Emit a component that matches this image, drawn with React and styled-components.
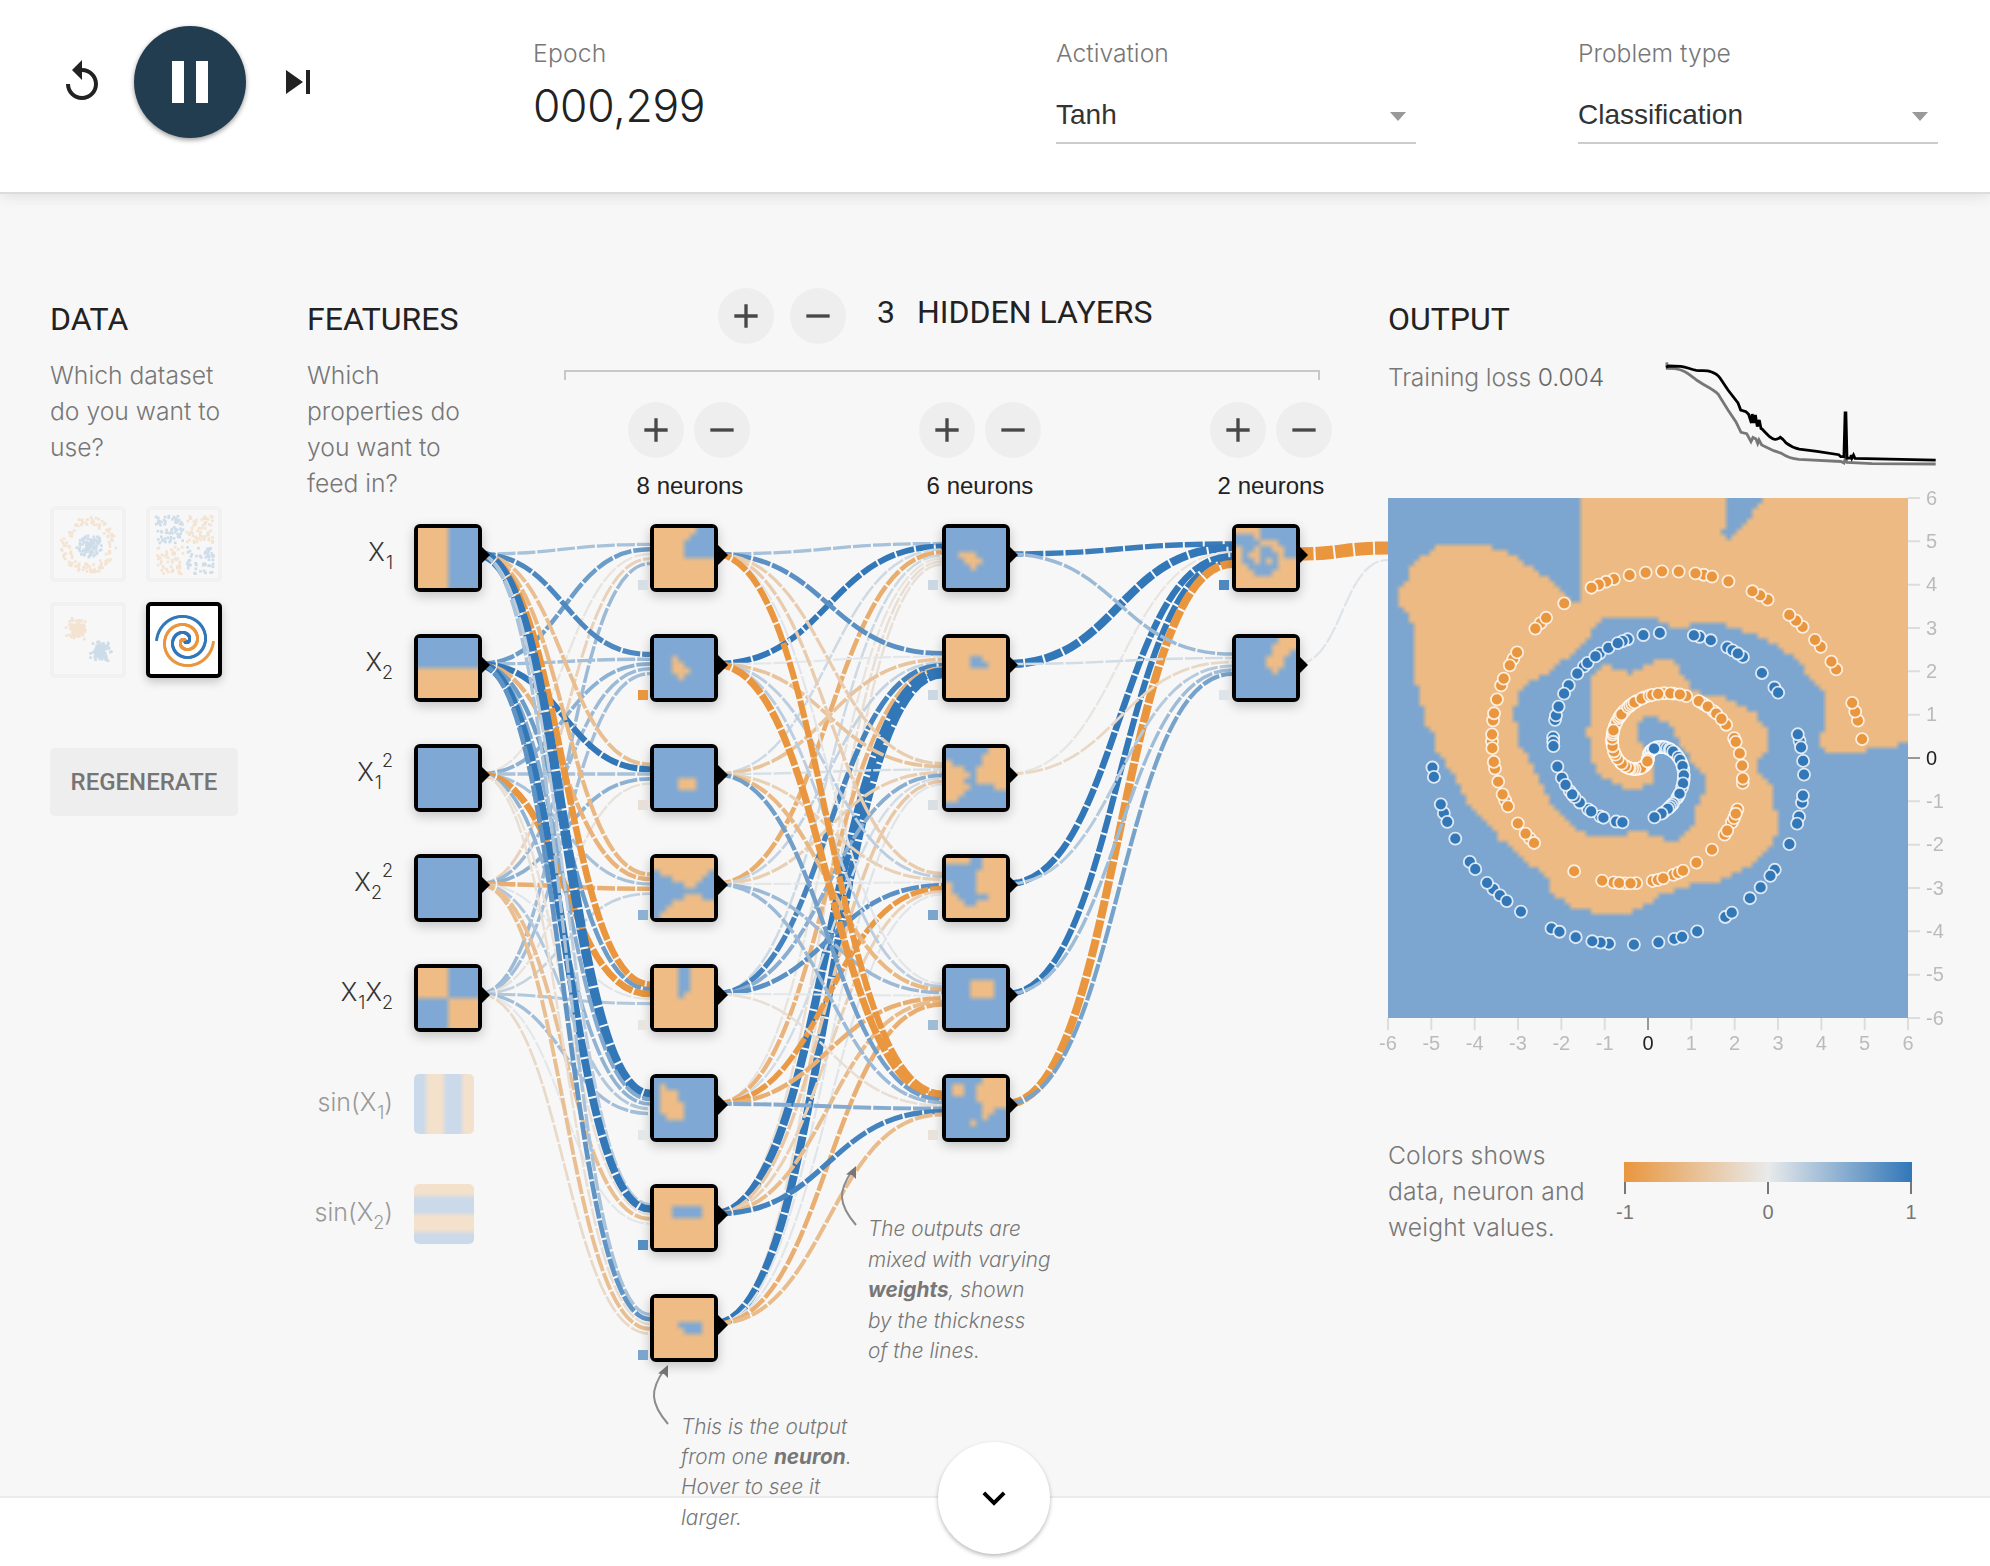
import React, { useLayoutEffect, useRef } from 'react';
import styled, { createGlobalStyle } from 'styled-components';

const ORANGE = '#e9963e';
const BLUE = '#3277b8';
const NEUTRAL = '#e8eaeb';
const sans = `"Liberation Sans", Arial, sans-serif`;
const light = `Inter, "Liberation Sans", sans-serif`;
const heading = `Roboto, "Liberation Sans", sans-serif`;

const GlobalStyle = createGlobalStyle`
  * { box-sizing: border-box; }
  body { margin: 0; background: #fff; font-family: ${sans}; color: #222; }
  button { border: 0; padding: 0; background: none; font: inherit; color: inherit; }
  h4, p { margin: 0; }
`;

/* ---------- network data ---------- */

const mix = (a, b, t) => {
  const p = (s, i) => parseInt(s.slice(1 + i * 2, 3 + i * 2), 16);
  return `rgb(${[0, 1, 2].map((i) => Math.round(p(a, i) + (p(b, i) - p(a, i)) * t)).join(',')})`;
};
const weightColor = (w) => mix(NEUTRAL, w < 0 ? ORANGE : BLUE, Math.min(1, Math.abs(w)));
const weightWidth = (w) => 2 + 3.6 * Math.abs(w);

const FIRST_CY = 554;
const PITCH = 110;
const COLUMN_CX = [444, 680, 972, 1262];
const OUTPUT_X = 1388;

// one row for each receiving neuron, one weight for each sender
const WEIGHTS = [
  [
    [0.35, 0.68, -0.07, -0.28, 0.42],
    [0.85, 0.38, 0.5, 0.42, 0.38],
    [-0.52, 1.15, 0.35, 0.5, -0.1],
    [-0.6, -0.65, 0.35, -0.7, 0.2],
    [-1.25, 0.68, -1.3, 0.04, 0.3],
    [2.1, 0.55, 0.48, 0.3, 0.38],
    [0.25, 1.6, -0.12, -0.52, 0.03],
    [0.35, 0.75, -0.14, -0.52, -0.2],
  ],
  [
    [0.36, 1.1, 0.15, -0.72, 0.15, -0.08, -0.14, -0.12],
    [0.78, 0.03, -0.45, 0.2, 0.9, -0.65, 1.7, 1.65],
    [-0.34, -0.45, 0.1, -0.32, 0.52, 0.12, -0.4, 0.05],
    [-0.36, 0.25, -0.3, 0.03, 0.78, -0.95, -0.3, 0.04],
    [0.04, 0.25, -0.6, 0.42, 0.03, -0.7, -0.55, -0.7],
    [-1.15, -1.4, 0.65, 0.42, -0.14, 0.55, 0.9, -0.55],
  ],
  [
    [0.95, 1.75, -0.06, 1.25, 1.15, -1.7],
    [0.42, 0.12, -0.22, 0.28, 0.4, 0.62],
  ],
  [[-3.1, 0.05]],
];

const links = [];
WEIGHTS.forEach((rows, layer) => {
  rows.forEach((row, to) => {
    row.forEach((w, from) => {
      const sx = COLUMN_CX[layer] + 34;
      const sy = FIRST_CY + from * PITCH;
      const tx = layer === 3 ? OUTPUT_X : COLUMN_CX[layer + 1] - 30;
      const ty = FIRST_CY + to * PITCH + ((from - (row.length - 1) / 2) / row.length) * 24;
      const mx = (sx + tx) / 2;
      links.push({ key: `${layer}-${from}-${to}`, w, d: `M${sx},${sy}C${mx},${sy} ${mx},${ty} ${tx},${ty}` });
    });
  });
});

/* 10 x 10 activation maps: "b" positive, "o" negative */
const O = 'oooooooooo';
const B = 'bbbbbbbbbb';
const FEATURES = [
  { parts: ['X', { sub: '1' }], map: Array(10).fill('ooooobbbbb'), on: true },
  { parts: ['X', { sub: '2' }], map: [B, B, B, B, B, O, O, O, O, O], on: true },
  { parts: ['X', { sub: '1' }, { sup: '2' }], map: Array(10).fill(B), on: true },
  { parts: ['X', { sub: '2' }, { sup: '2' }], map: Array(10).fill(B), on: true },
  {
    parts: ['X', { sub: '1' }, 'X', { sub: '2' }],
    map: [...Array(5).fill('ooooobbbbb'), ...Array(5).fill('bbbbbooooo')],
    on: true,
  },
  { parts: ['sin(X', { sub: '1' }, ')'], map: Array(10).fill('bbooobbboo') },
  { parts: ['sin(X', { sub: '2' }, ')'], map: [O, O, B, B, B, O, O, O, B, B] },
];

const LAYERS = [
  {
    tip: 10,
    biasLeft: -16.5,
    shift: 0,
    countShift: 1,
    neurons: [
      { bias: 0.1, map: ['ooooooobbb', 'oooooobbbb', 'ooooobbbbb', 'ooooobbbbb', 'ooooobbbbb', O, O, O, O, O] },
      { bias: -1, map: [B, B, B, 'bbbobbbbbb', 'bbboobbbbb', 'bbbooobbbb', 'bbbbobbbbb', B, B, B] },
      { bias: -0.12, map: [B, B, B, B, B, 'bbbbooobbb', 'bbbbooobbb', B, B, B] },
      {
        bias: 0.5,
        map: [O, O, 'boooooooob', 'bbbooooobb', 'bbbbboobbb', B, 'bbbbbooobb', 'bbbooooooo', 'bboooooooo', 'booooooooo'],
      },
      { bias: -0.06, map: ['oooobboooo', 'oooobboooo', 'oooobboooo', 'oooobboooo', 'oooobooooo', O, O, O, O, O] },
      {
        bias: 0.03,
        map: [B, 'bobbbbbbbb', 'booobbbbbb', 'booobbbbbb', 'boooobbbbb', 'boooobbbbb', 'bbooobbbbb', B, B, B],
      },
      { bias: 0.8, map: [O, O, O, 'ooobbbbboo', 'ooobbbbboo', O, O, O, O, O] },
      { bias: 0.6, map: [O, O, O, O, 'oooobbbboo', 'ooooobbboo', O, O, O, O] },
    ],
  },
  {
    tip: 8,
    biasLeft: -18,
    shift: -1,
    countShift: 0,
    neurons: [
      { bias: 0.16, map: [B, B, B, B, 'bbooobbbbb', 'bbbooobbbb', 'bbbbobbbbb', B, B, B] },
      { bias: 0.16, map: [O, O, O, 'oooobboooo', 'oooobbbooo', O, O, O, O, O] },
      {
        bias: 0.09,
        map: [
          'bbbbbbbooo', 'bbbbbboooo', 'obbbbboooo', 'ooobbooooo', 'oooobooooo',
          'ooobbooooo', 'oooobbbboo', 'ooobbbbbbb', 'oobbbbbbbb', B,
        ],
      },
      {
        bias: 0.6,
        map: [
          'oooobboooo', 'bbbbbboooo', 'bbbbbooooo', 'bbbbbooooo', 'obbbbooooo',
          'obbbbooooo', 'oobbbbbooo', 'ooobbooooo', O, O,
        ],
      },
      { bias: 0.4, map: [B, B, 'bbbboooobb', 'bbbboooobb', 'bbbboooobb', B, B, B, B, B] },
      {
        bias: -0.1,
        map: [
          'bbbbbboooo', 'boobbooooo', 'boobbooooo', 'bbbbbooooo', 'bbbbbboooo',
          'bbbbbboobb', 'bbbbbbobbb', 'bbbbobbbbb', B, B,
        ],
      },
    ],
  },
  {
    tip: 8,
    biasLeft: -17.5,
    shift: 0,
    countShift: 0,
    neurons: [
      {
        bias: 0.85,
        map: [
          'oooobbbbbb', 'bbbobbbbbb', 'bbbbooobbb', 'obbobboobb', 'oboobbbobb',
          'obbobobooo', 'oobbbbbooo', 'ooobbboooo', O, O,
        ],
      },
      { bias: 0.05, map: ['bbbbbbbooo', 'bbbbbboooo', 'bbbbbbooob', 'bbbbbooobb', 'bbbbbooobb', 'bbbbbbobbb', B, B, B, B] },
    ],
  },
];

/* ---------- output map ---------- */

const REGION = [
  37, 0, 37, 20, 35, 20, 34, 18.3, 33, 17.4, 32, 16.5, 31, 15.1, 29, 15, 27.8, 13.3, 26.2, 12.9, 25, 11.2, 23, 10.6,
  22.4, 10, 20, 10, 19.7, 9, 9, 9, 8, 11, 6, 11.1, 5, 12.2, 4.1, 14.5, 3, 16.4, 2, 18.3, 2, 20.6, 3, 21.2, 4, 22.2,
  4.5, 24.1, 5, 24.2, 5, 35.6, 6, 36.3, 6, 39.6, 7, 40, 7.1, 42.9, 9, 45.9, 9, 48, 11, 51, 12.9, 54, 14, 56.5, 16, 59.5,
  17.8, 61, 20, 63.2, 21.6, 65.7, 23.9, 67.2, 25.8, 69.4, 27, 70.9, 28.8, 71.3, 30, 72.7, 31, 73.5, 31, 75.7, 33, 76.9,
  34.1, 77.9, 36, 78.8, 38.3, 79, 39, 79.9, 46.7, 79.9, 49, 78.2, 50.9, 77.5, 53.2, 76, 55.8, 75.3, 57.3, 74.7, 59.6,
  74.2, 63.4, 73.8, 66.5, 72.4, 69.5, 70.9, 71.8, 68.7, 73.7, 66.8, 74.8, 64.6, 74.8, 60.6, 73.9, 59.5, 73.9, 55.4,
  72.2, 53.6, 71, 52.5, 71.4, 50.6, 72.8, 48.8, 72.8, 44.4, 71.8, 43.3, 71, 41.5, 68.7, 40.3, 66.5, 39.1, 64.2, 38.1,
  61.1, 37.9, 58.1, 37, 57.3, 34.8, 56.2, 33.4, 54.9, 31.2, 51.3, 31.2, 50.5, 31.8, 49, 32.6, 47, 33.4, 46.5, 34, 45.6,
  33.1, 43.3, 32.8, 42.5, 32.1, 41, 32.2, 39.8, 33.4, 39, 34.4, 39, 44, 38.1, 44.8, 38.5, 46.2, 39, 48.1, 39, 50.7, 41,
  53.2, 42.9, 54.8, 45.2, 55.8, 49, 55.8, 49.5, 54.8, 51, 54.7, 51, 51, 49.7, 48.4, 47.8, 46.2, 47.8, 43.3, 49, 42.2,
  50.6, 42, 52.8, 43.1, 54.7, 44, 55, 45.5, 57, 48.4, 58.5, 51, 60.8, 53.2, 61, 56.2, 60, 58.4, 58.9, 60.6, 58.5, 63.5,
  57, 65, 55.4, 66.1, 53.2, 65.7, 52.8, 65, 50.1, 64.6, 49.7, 64.1, 46.3, 64.1, 45.6, 65, 38.3, 65, 36, 63.5, 33.8, 61,
  31.9, 59.1, 30.3, 56.9, 29.6, 55.1, 28.1, 52.5, 26.9, 49.9, 25.2, 47.7, 25, 42.9, 24, 42.2, 24, 40.3, 25, 39.6, 25,
  37.4, 26.9, 35.5, 29.2, 34.4, 31.5, 33.1, 33, 31.2, 35.3, 30.5, 36.8, 28.6, 38.9, 26.7, 39.1, 25.1, 40.2, 24.1, 42.1,
  23, 51.9, 23, 52.4, 23.8, 53.5, 24.1, 54.3, 24.9, 57.3, 24.9, 58.3, 24, 64.8, 24, 65.3, 24.9, 67.6, 25.1, 68.4, 25.9,
  70.6, 26.2, 72.5, 27.2, 74.8, 28.3, 76.3, 29.7, 78.3, 30.5, 79.8, 32.1, 80.2, 33.7, 82, 35.3, 83.2, 36.9, 84.1, 38.5,
  84.1, 44.8, 83, 45.9, 83.2, 47.7, 84.3, 48.8, 91.9, 48.8, 92.3, 48.1, 97.6, 47.9, 98, 47, 100, 46.8, 100, 0, 72, 0,
  71.4, 1.3, 70.1, 2.3, 69.9, 3.9, 68.4, 5.2, 67.2, 6.2, 66, 7.1, 65.5, 8.1, 65, 7.1, 64.2, 6.9, 64, 6.2, 64.8, 5.5,
  64.8, 0,
];

const insideRegion = (x, y) => {
  let inside = false;
  const n = REGION.length / 2;
  for (let i = 0, j = n - 1; i < n; j = i++) {
    const xi = REGION[2 * i], yi = REGION[2 * i + 1], xj = REGION[2 * j], yj = REGION[2 * j + 1];
    if (yi > y !== yj > y && x < ((xj - xi) * (y - yi)) / (yj - yi) + xi) inside = !inside;
  }
  return inside;
};

const OUTPUT_MAP = Array.from({ length: 100 }, (_, r) =>
  Array.from({ length: 100 }, (_, c) => (insideRegion(c + 0.5, r + 0.5) ? 'o' : 'b')).join('')
);

const BLUE_SAMPLES = [
  4, 7, 9, 10, 12, 15, 16, 18, 20, 22, 23, 25, 27, 28, 31, 33, 30, 35, 39, 37, 43, 41, 48, 46, 52, 50, 57, 56, 55, 60,
  61, 62, 65, 63, 66, 69, 82, 80, 87, 86, 91, 90, 94, 98, 96, 97, 102, 100, 105, 112, 111, 110, 116, 117, 119, 124, 122,
  129, 130, 127, 133, 132, 135, 139, 138, 137, 142, 145, 152, 151, 154, 157, 158, 160, 159, 164, 167, 168, 176, 177,
  175, 179, 181, 185, 184, 187, 188, 191, 195, 196, 198, 200, 204, 203, 208, 211, 210, 213, 216, 219, 220, 221, 223,
  226, 225, 230, 234, 233, 232, 235, 238, 237, 241, 244, 243, 245, 249, 248, 13,
];
const ORANGE_SAMPLES = [
  1, 2, 6, 8, 10, 12, 16, 18, 14, 20, 22, 24, 27, 25, 28, 32, 31, 35, 38, 40, 45, 46, 43, 47, 49, 50, 53, 55, 51, 57, 58,
  60, 61, 59, 63, 64, 65, 67, 66, 70, 69, 72, 73, 77, 75, 80, 79, 84, 82, 90, 89, 88, 93, 91, 94, 98, 96, 102, 103, 106,
  109, 113, 112, 119, 122, 121, 120, 125, 124, 129, 133, 138, 137, 136, 142, 141, 140, 145, 147, 149, 148, 146, 151,
  156, 165, 166, 164, 168, 172, 173, 171, 175, 177, 181, 182, 180, 178, 184, 185, 187, 189, 190, 193, 192, 194, 199,
  200, 198, 203, 210, 209, 208, 207, 212, 214, 216, 218, 221, 220, 222, 224, 229, 228, 227, 234, 233, 232, 237, 236,
  240, 239, 246, 245, 244, 248, 4,
];
const spiral = (i, sign) => {
  const r = (i / 250) * 5;
  const t = (i / 250) * 3.5 * Math.PI;
  return [sign * r * Math.sin(t), sign * r * Math.cos(t)];
};

const BlackLoss =
  'M1,7.3L3.8,6L15.6,6.3C22,7 26,9.5 31.4,10.3C38,11 42,10 46,11.8C50,13.2 53,15 55,18L63,30L73,43L75.7,50L81,51.7L83.6,54.3L86.4,63L87.2,54L89,63L90.4,55L92.3,66.5L94.3,60L96,68.5L97,69L100.6,72.7L104.6,76.7Q108,79.5 110,79.3Q113,79.5 115.3,77.3Q118,79 121,82.8Q127,87.5 134.3,89.2L152,91.3L173.8,94.7L175.8,96.7L178.9,96.7L180.1,53L180.9,53L182,98.3L185.5,98L186.3,95L187,98L188.5,95L190,98.3L270.7,100.2';
const GreyLoss =
  'M1.8,2.3L2.2,8.3L10,8.6C20,10 24,14.5 31.4,20C40,26 48,29 53,34L63,50L71,62L76,72.3L81.7,73.6L86,81.7L88,77.5L91,79L92.7,83.5L94,80L96.7,85L108.6,90.7L116.5,93.3Q124,98.4 134,99.3L175.8,101.5L179,103L180.4,98L182,102.3L207,103.7L270.7,104';

/* ---------- dataset thumbnails ---------- */

const makeRandom = (seed) => () => {
  seed = (seed + 0x6d2b79f5) | 0;
  let t = Math.imul(seed ^ (seed >>> 15), 1 | seed);
  t = (t + Math.imul(t ^ (t >>> 7), 61 | t)) ^ t;
  return ((t ^ (t >>> 14)) >>> 0) / 4294967296;
};
const makeDots = (kind) => {
  const rnd = makeRandom(kind.length * 977 + 5);
  const dots = [];
  if (kind === 'circle') {
    for (let i = 0; i < 240; i++) {
      const inner = i % 2 === 0;
      const r = inner ? rnd() * 13 : 19 + rnd() * 9;
      const a = rnd() * Math.PI * 2;
      dots.push([35 + r * Math.cos(a), 35 + r * Math.sin(a), inner ? BLUE : ORANGE]);
    }
  } else if (kind === 'xor') {
    for (let i = 0; i < 240; i++) {
      const sx = rnd() < 0.5 ? -1 : 1;
      const sy = rnd() < 0.5 ? -1 : 1;
      dots.push([35 + sx * (2 + rnd() * 27), 35 + sy * (2 + rnd() * 27), sx * sy > 0 ? BLUE : ORANGE]);
    }
  } else if (kind === 'gauss') {
    for (let i = 0; i < 260; i++) {
      const g = () => (rnd() + rnd() + rnd() + rnd() - 2) * 7;
      const up = i % 2 === 0;
      dots.push([(up ? 23 : 47) + g(), (up ? 23 : 46) + g(), up ? ORANGE : BLUE]);
    }
  } else {
    for (let i = 0; i < 250; i++) {
      const [x, y] = spiral(i, 1);
      dots.push([35 + x * 5.7, 35 + y * 5.7, BLUE]);
      dots.push([35 - x * 5.7, 35 - y * 5.7, ORANGE]);
    }
  }
  return dots;
};
const DATASETS = ['circle', 'xor', 'gauss', 'spiral'].map((kind) => ({ kind, dots: makeDots(kind) }));

/* ---------- styled parts ---------- */

const Header = styled.header`
  position: relative;
  z-index: 2;
  display: grid;
  grid-template-columns: 533px 523px 522px 1fr;
  height: 194px;
  background: #fff;
  border-bottom: 2px solid #dcdcdc;
  box-shadow: 0 2px 14px rgba(0, 0, 0, 0.1);
`;
const Controls = styled.div`
  display: flex;
  align-items: center;
  gap: 28px;
  height: 112px;
  margin: 26px 0 0 58px;
`;
const IconButton = styled.button`
  display: flex;
  width: 48px;
  height: 48px;
  color: #222;
`;
const PlayButton = styled.button`
  display: flex;
  align-items: center;
  justify-content: center;
  width: 112px;
  height: 112px;
  border-radius: 50%;
  background: #223d4f;
  color: #fff;
  box-shadow: 0 2px 5px rgba(0, 0, 0, 0.4);
`;
const Field = styled.div`
  padding-top: 35px;
`;
const LightText = styled.p`
  font: 340 24.7px/36px ${light};
  letter-spacing: ${(p) => p.$spacing || 0}px;
  width: ${(p) => (p.$width ? `${p.$width}px` : 'auto')};
  color: #777;
`;
const EpochValue = styled.div`
  margin-top: 7px;
  font: 340 44.4px/56px ${light};
  letter-spacing: -0.3px;
  color: #222;
`;
const Select = styled.div`
  display: flex;
  align-items: center;
  justify-content: space-between;
  width: 360px;
  margin-top: 26px;
  padding: 0 10px 9px 0;
  border-bottom: 2px solid #ccc;
  font: 28px/36px ${sans};
  color: #333;
`;
const Caret = styled.span`
  border: 8px solid transparent;
  border-top: 9px solid #999;
  border-bottom: 0;
  margin-top: 2px;
`;

const Main = styled.main`
  position: relative;
  display: grid;
  grid-template-columns: 257px 257px 824px 1fr;
  height: 1304px;
  padding-left: 50px;
  background: #f7f7f7;
  border-bottom: 2px solid #ebebeb;
`;
const Links = styled.svg`
  position: absolute;
  left: 0;
  top: 0;
`;
const Column = styled.section`
  position: relative;
  padding-top: ${(p) => p.$top || 106}px;
`;
const Title = styled.h4`
  font: 400 32px/38px ${heading};
  margin-bottom: 19px;
  color: #222;
`;
const Thumbs = styled.div`
  display: grid;
  grid-template-columns: 76px 76px;
  gap: 20px;
  margin-top: 41px;
`;
const Thumb = styled.div`
  width: 76px;
  height: 76px;
  border: 4px solid ${(p) => (p.$on ? '#000' : 'rgba(0,0,0,0.1)')};
  border-radius: 5px;
  background: ${(p) => (p.$on ? '#fff' : 'transparent')};
  opacity: ${(p) => (p.$on ? 1 : 0.2)};
  box-shadow: ${(p) => (p.$on ? '0 4px 10px rgba(0,0,0,0.2)' : 'none')};
  svg { display: block; }
`;
const Regenerate = styled.button`
  display: block;
  width: 188px;
  height: 68px;
  margin-top: 70px;
  border-radius: 5px;
  background: #eee;
  font: 500 24px/68px ${heading};
  color: #757575;
`;
const FeatureList = styled.div`
  display: flex;
  flex-direction: column;
  gap: 42px;
  margin-top: 23px;
`;
const FeatureRow = styled.div`
  display: flex;
  gap: 20px;
  height: 68px;
`;
const FeatureLabel = styled.div`
  width: 86px;
  margin-right: 1px;
  padding-top: 10px;
  text-align: right;
  white-space: nowrap;
  font: 340 25px/36px ${light};
  color: ${(p) => (p.$on ? '#333' : '#999')};
`;
const Shifted = styled.span`
  position: relative;
  top: ${(p) => p.$shift}px;
  padding-left: ${(p) => (p.$narrow ? 1 : 0)}px;
  font-size: 18px;
  line-height: 1;
`;
const NodeBox = styled.div`
  position: relative;
  width: 68px;
  height: 68px;
  border: 4px solid #000;
  border-radius: 6px;
  background: #000;
  box-shadow: 0 4px 12px rgba(0, 0, 0, 0.22);
`;
const IdleBox = styled.div`
  width: 60px;
  height: 60px;
  border-radius: 5px;
  overflow: hidden;
  opacity: 0.38;
`;
const Tip = styled.span`
  position: absolute;
  left: 64px;
  top: ${(p) => 26.5 - p.$size}px;
  border: ${(p) => p.$size}px solid transparent;
  border-left-color: #000;
  border-right: 0;
`;
const Bias = styled.span`
  position: absolute;
  left: ${(p) => p.$left}px;
  top: 52px;
  width: 10px;
  height: 10px;
  background: ${(p) => p.$color};
`;
const Bitmap = styled.canvas`
  display: block;
  grid-area: 1 / 1;
  width: ${(p) => p.$size}px;
  height: ${(p) => p.$size}px;
`;
const LayerBar = styled.div`
  display: flex;
  gap: 16px;
  margin-left: 154px;
  height: 56px;
  ${Title} {
    margin: 0;
    padding-top: 5px;
    white-space: nowrap;
  }
`;
const LayerCount = styled(Title)`
  width: 39px;
  text-indent: 15px;
`;
const RoundButton = styled.button`
  display: flex;
  align-items: center;
  justify-content: center;
  width: 56px;
  height: 56px;
  border-radius: 50%;
  background: #eee;
  color: #484848;
`;
const Bracket = styled.div`
  width: 756px;
  height: 10px;
  margin-top: 26px;
  border: 2px solid #c8c8c8;
  border-bottom: 0;
`;
const LayerGrid = styled.div`
  display: grid;
  grid-template-columns: 292px 290px 122px;
  padding: 22px 0 0 64px;
`;
const LayerHead = styled.div`
  margin-left: ${(p) => p.$shift}px;
`;
const Pair = styled.div`
  display: flex;
  gap: 10px;
`;
const NeuronCount = styled.div`
  width: 122px;
  margin: 10px 0 0 ${(p) => p.$shift}px;
  text-align: center;
  font: 24px/36px ${sans};
`;
const NeuronStack = styled.div`
  display: flex;
  flex-direction: column;
  gap: 42px;
  padding: 20px 0 0 22px;
`;
const Callout = styled.p`
  position: absolute;
  z-index: 1;
  left: ${(p) => p.$x}px;
  top: ${(p) => p.$y}px;
  font: italic 340 20.8px/${(p) => p.$line}px ${light};
  color: #777;
  white-space: nowrap;
  b { font-weight: 700; }
`;
const LossRow = styled.div`
  display: flex;
  height: 141px;
  svg { margin: 3px 0 0; overflow: visible; }
`;
const LossText = styled.div`
  width: 277px;
  padding-top: 2px;
`;
const Strong = styled.span`
  color: #666;
`;
const HeatMap = styled.div`
  display: grid;
  justify-items: start;
  width: 520px;
  height: 520px;
  svg { grid-area: 1 / 1; overflow: visible; }
`;
const LegendRow = styled.div`
  display: flex;
  margin-top: 118px;
  gap: 26px;
  > p { padding-top: 1px; }
`;
const Scale = styled.div`
  width: 288px;
  padding-top: 26px;
`;
const ScaleBar = styled.div`
  height: 20px;
  background: linear-gradient(to right, ${ORANGE}, ${NEUTRAL}, ${BLUE});
`;
const ScaleTicks = styled.div`
  display: flex;
  justify-content: space-between;
  margin: 0 -19px;
`;
const ScaleTick = styled.div`
  width: 40px;
  text-align: center;
  font: 20px/24px ${sans};
  color: #777;
  &::before {
    content: '';
    display: block;
    width: 2px;
    height: 12px;
    margin: 0 auto 6px;
    background: #777;
  }
`;
const Footer = styled.footer`
  height: 68px;
  background: #fff;
  display: flex;
  justify-content: center;
`;
const MoreButton = styled.button`
  position: relative;
  z-index: 3;
  display: flex;
  align-items: center;
  justify-content: center;
  width: 112px;
  height: 112px;
  margin: -56px 2px 0 0;
  border-radius: 50%;
  background: #fff;
  color: #000;
  box-shadow: 0 2px 4px rgba(0, 0, 0, 0.28);
`;

/* ---------- components ---------- */

const ICONS = {
  replay: 'M12 5V1L7 6l5 5V7c3.31 0 6 2.69 6 6s-2.69 6-6 6-6-2.69-6-6H4c0 4.42 3.58 8 8 8s8-3.58 8-8-3.58-8-8-8z',
  pause: 'M6 19h4V5H6v14zm8-14v14h4V5h-4z',
  next: 'M6 18l8.5-6L6 6v12zM16 6v12h2V6h-2z',
  add: 'M19 13h-6v6h-2v-6H5v-2h6V5h2v6h6v2z',
  remove: 'M19 13H5v-2h14v2z',
  down: 'M7.41 8.59L12 13.17l4.59-4.58L18 10l-6 6-6-6z',
};
const Icon = ({ name, size }) => (
  <svg width={size} height={size} viewBox="0 0 24 24" fill="currentColor">
    <path d={ICONS[name]} />
  </svg>
);

const MapCanvas = ({ map, size, orange = [239, 188, 133], blue = [127, 169, 212] }) => {
  const ref = useRef(null);
  useLayoutEffect(() => {
    const n = map.length;
    const ctx = ref.current.getContext('2d');
    const image = ctx.createImageData(n, n);
    map.forEach((row, r) =>
      [...row].forEach((cell, c) => {
        const color = cell === 'o' ? orange : blue;
        image.data.set([...color, 255], (r * n + c) * 4);
      })
    );
    ctx.putImageData(image, 0, 0);
  }, []);
  return <Bitmap ref={ref} width={map.length} height={map.length} $size={size} />;
};

const Node = ({ map, tip, bias, biasLeft }) => (
  <NodeBox>
    <MapCanvas map={map} size={60} />
    <Tip $size={tip} />
    {bias !== undefined && <Bias $left={biasLeft} $color={weightColor(bias)} />}
  </NodeBox>
);

const PlusMinus = () => (
  <>
    <RoundButton><Icon name="add" size={40} /></RoundButton>
    <RoundButton><Icon name="remove" size={40} /></RoundButton>
  </>
);

const Dropdown = ({ label, value }) => (
  <Field>
    <LightText>{label}</LightText>
    <Select>{value}<Caret /></Select>
  </Field>
);

const UNIT = 520 / 12;
const TICKS = Array.from({ length: 13 }, (_, i) => i - 6);

const OutputPlot = () => (
  <HeatMap>
    <MapCanvas map={OUTPUT_MAP} size={520} orange={[236, 186, 130]} blue={[124, 166, 208]} />
    <svg width="520" height="520">
      {[[BLUE_SAMPLES, 1, BLUE], [ORANGE_SAMPLES, -1, ORANGE]].map(([list, sign, color]) =>
        list.map((i) => {
          const [x, y] = spiral(i, sign);
          return (
            <circle key={color + i} cx={260 + x * UNIT} cy={260 - y * UNIT} r="6" fill={color}
              stroke="#fff" strokeOpacity="0.8" strokeWidth="1.8" />
          );
        })
      )}
      {TICKS.map((v) => (
        <g key={v} fontFamily="Liberation Sans, Arial, sans-serif" fontSize="20" fill={v ? '#bbb' : '#222'}>
          <path d={`M${260 + v * UNIT},520v12M520,${260 - v * UNIT}h12`} stroke={v ? '#ddd' : '#999'} strokeWidth="2" />
          <text x={260 + v * UNIT} y="552" textAnchor="middle">{v}</text>
          <text x="538" y={266.5 - v * UNIT}>{v}</text>
        </g>
      ))}
    </svg>
  </HeatMap>
);

export default function App() {
  return (
    <>
      <GlobalStyle />
      <Header>
        <Controls>
          <IconButton><Icon name="replay" size={48} /></IconButton>
          <PlayButton><Icon name="pause" size={72} /></PlayButton>
          <IconButton><Icon name="next" size={48} /></IconButton>
        </Controls>
        <Field>
          <LightText $spacing={0.2}>Epoch</LightText>
          <EpochValue>000,299</EpochValue>
        </Field>
        <Dropdown label="Activation" value="Tanh" />
        <Dropdown label="Problem type" value="Classification" />
      </Header>

      <Main>
        <Links width="1390" height="1304" viewBox="0 194 1390 1304" fill="none">
          {links.map((l) => (
            <path key={l.key} d={l.d} stroke={weightColor(l.w)} strokeWidth={weightWidth(l.w)}
              strokeDasharray="18 2" strokeDashoffset="-19.33" />
          ))}
          {[[856, 1225], [668, 1424]].map(([x, y]) => (
            <g key={x} transform={`translate(${x},${y})`}>
              <path d="M0,0C-18,-21 -18,-34 -4,-54" stroke="#8c8c8c" strokeWidth="2" />
              <path d="M0,-59l-10,8.5 6,0.5 4,4z" fill="#777" />
            </g>
          ))}
        </Links>

        <Column>
          <Title>DATA</Title>
          <LightText $width={188}>Which dataset do you want to use?</LightText>
          <Thumbs>
            {DATASETS.map(({ kind, dots }) => (
              <Thumb key={kind} $on={kind === 'spiral'}>
                <svg width="68" height="68">
                  {dots.map(([x, y, color], i) => (
                    <rect key={i} x={x - 1.3} y={y - 1.3} width="2.6" height="2.6" fill={color} />
                  ))}
                </svg>
              </Thumb>
            ))}
          </Thumbs>
          <Regenerate>REGENERATE</Regenerate>
        </Column>

        <Column>
          <Title>FEATURES</Title>
          <LightText $width={170}>Which properties do you want to feed in?</LightText>
          <FeatureList>
            {FEATURES.map((f, i) => (
              <FeatureRow key={i}>
                <FeatureLabel $on={f.on}>
                  {f.parts.map((part, k) =>
                    typeof part === 'string' ? part : (
                      <Shifted key={k} $shift={part.sub ? 8 : -14} $narrow={part.sub === '1'}>
                        {part.sub || part.sup}
                      </Shifted>
                    )
                  )}
                </FeatureLabel>
                {f.on ? <Node map={f.map} tip={8} /> : <IdleBox><MapCanvas map={f.map} size={60} /></IdleBox>}
              </FeatureRow>
            ))}
          </FeatureList>
        </Column>

        <Column $top={94}>
          <LayerBar>
            <PlusMinus />
            <LayerCount>3</LayerCount>
            <Title>HIDDEN LAYERS</Title>
          </LayerBar>
          <Bracket />
          <LayerGrid>
            {LAYERS.map(({ neurons, tip, biasLeft, shift, countShift }, i) => (
              <div key={i}>
                <LayerHead $shift={shift}>
                  <Pair><PlusMinus /></Pair>
                  <NeuronCount $shift={countShift}>{neurons.length} neurons</NeuronCount>
                </LayerHead>
                <NeuronStack>
                  {neurons.map((n, k) => (
                    <Node key={k} map={n.map} bias={n.bias} biasLeft={biasLeft} tip={tip} />
                  ))}
                </NeuronStack>
              </div>
            ))}
          </LayerGrid>
        </Column>

        <Column>
          <Title>OUTPUT</Title>
          <LossRow>
            <LossText><LightText $spacing={-0.15}>Training loss <Strong>0.004</Strong></LightText></LossText>
            <svg width="272" height="110" fill="none" strokeWidth="2.8">
              <path d={GreyLoss} stroke="#777" />
              <path d={BlackLoss} stroke="#000" />
            </svg>
          </LossRow>
          <OutputPlot />
          <LegendRow>
            <LightText $width={210} $spacing={0.15}>Colors shows data, neuron and weight values.</LightText>
            <Scale>
              <ScaleBar />
              <ScaleTicks>
                <ScaleTick>-1</ScaleTick>
                <ScaleTick>0</ScaleTick>
                <ScaleTick>1</ScaleTick>
              </ScaleTicks>
            </Scale>
          </LegendRow>
        </Column>

        <Callout $x={868} $y={1020} $line={30.5}>
          The outputs are<br />mixed with varying<br /><b>weights</b>, shown<br />by the thickness<br />of the lines.
        </Callout>
        <Callout $x={681} $y={1218} $line={30.2}>
          This is the output<br />from one <b>neuron</b>.<br />Hover to see it<br />larger.
        </Callout>
      </Main>

      <Footer>
        <MoreButton><Icon name="down" size={46} /></MoreButton>
      </Footer>
    </>
  );
}
